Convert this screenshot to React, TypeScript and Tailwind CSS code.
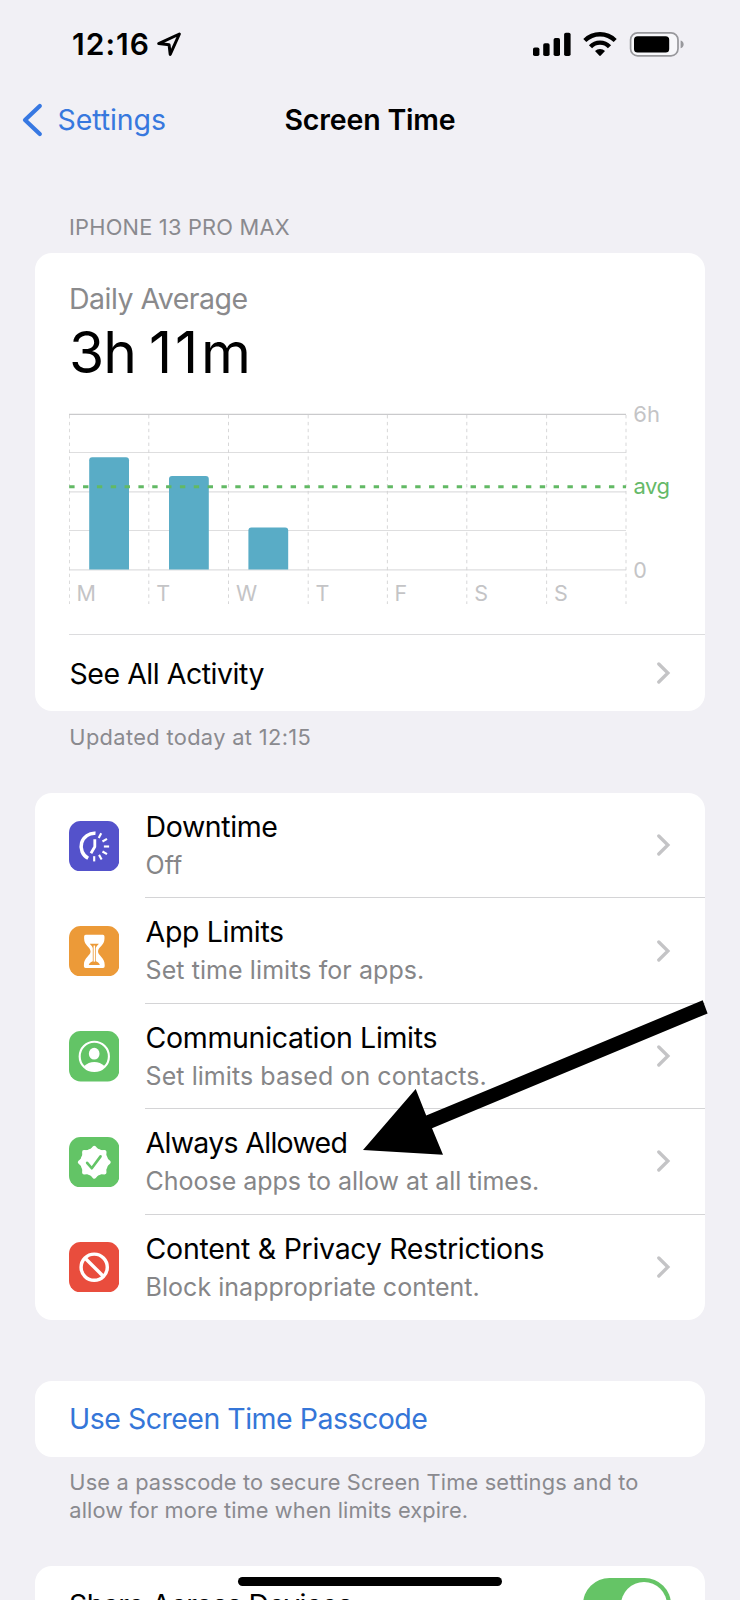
import type { ReactNode } from "react";

const days = ["M", "T", "W", "T", "F", "S", "S"];
const bars = [
  { x: 89.2, top: 457.3 },
  { x: 169, top: 476 },
  { x: 248.4, top: 527.6 },
];
const columnLines = [69.4, 148.8, 228.5, 308.2, 387.4, 466.8, 546.6, 626];

function Chevron() {
  return (
    <svg className="h-[22px] w-[14px] shrink-0" viewBox="0 0 14 22" fill="none">
      <path d="M1.8 2 L10.9 11 L1.8 20" stroke="#c4c4c6" strokeWidth="3.3" strokeLinejoin="miter" strokeLinecap="round" />
    </svg>
  );
}

function StatusBar() {
  return (
    <div className="flex h-[88px] items-center justify-between pl-[72px] pr-[55px]">
      <div className="flex items-center">
        <span className="w-[83.5px] text-[30px] leading-[36px] font-[590] tracking-[1px]">12:16</span>
        <svg className="h-[26px] w-[26px]" viewBox="155.5 31 26 26" fill="none">
          <path d="M178.9 34 L158.2 43.6 L168.6 44.8 L169.7 54.4 Z" stroke="#000" strokeWidth="3" strokeLinejoin="round" />
        </svg>
      </div>
      <svg className="h-[26px] w-[153px]" viewBox="532 30 153 26">
        <rect x="533" y="46.4" width="6.4" height="8.7" rx="1.8" />
        <rect x="543.2" y="42.2" width="6.4" height="12.9" rx="1.8" />
        <rect x="553.6" y="37" width="6.4" height="18.1" rx="1.8" />
        <rect x="564.1" y="31.8" width="6.5" height="23.3" rx="1.8" />
        <g fill="none" stroke="#000" strokeWidth="4.3">
          <path d="M584.8 39.5 A21.6 21.6 0 0 1 615.2 39.5" />
          <path d="M590.5 45.8 A12.9 12.9 0 0 1 609.5 45.8" />
        </g>
        <path d="M595 50 A7 7 0 0 1 605 50 L600.8 54.5 Q600 55.3 599.2 54.5 Z" />
        <rect x="630.6" y="31.8" width="47.4" height="23" rx="7" fill="#f7f7fa" stroke="#98989c" strokeWidth="1.7" />
        <rect x="634" y="35.2" width="35.2" height="16.4" rx="3.6" />
        <path d="M680.6 39.6 Q683.6 40.6 683.6 43.4 Q683.6 46.2 680.6 47.2 Z" fill="#98989c" />
      </svg>
    </div>
  );
}

function NavBar() {
  return (
    <div className="grid h-[62px] grid-cols-[1fr_auto_1fr] items-center pt-px text-[28.5px] leading-[34px]">
      <div className="flex items-center pl-[22px] text-[#3778de]">
        <svg className="h-[34px] w-[22px]" viewBox="0 0 22 34" fill="none">
          <path d="M17.8 3 L3 17 L17.8 31" stroke="#3778e2" strokeWidth="4.2" strokeLinecap="round" strokeLinejoin="round" />
        </svg>
        <span className="pl-[13.5px] tracking-[-0.08px]">Settings</span>
      </div>
      <h1 className="font-[590] tracking-[-0.17px]">Screen Time</h1>
    </div>
  );
}

function Chart() {
  return (
    <svg className="mt-[13px] block h-[234px] w-[636px]" viewBox="69 400 636 234">
      {[452.5, 491.9, 530.5, 569.8].map((y) => (
        <line key={y} x1="69" x2="626" y1={y} y2={y} stroke="#dededf" strokeWidth="1.2" />
      ))}
      <line x1="69" x2="626" y1="414.4" y2="414.4" stroke="#cacacc" strokeWidth="1.1" />
      {columnLines.map((x) => (
        <line key={x} x1={x} x2={x} y1="415" y2="604" stroke="#d2d2d4" strokeWidth="0.9" strokeDasharray="3.4 3.5" />
      ))}
      {bars.map((b) => (
        <path
          key={b.x}
          d={`M${b.x} 569.6 V${b.top + 3} q0 -3 3 -3 h33.8 q3 0 3 3 V569.6 Z`}
          fill="#59acc6"
        />
      ))}
      <line x1="69.2" x2="626" y1="486.8" y2="486.8" stroke="#62b964" strokeWidth="2.9" strokeDasharray="5.4 8.44" />
      <g fill="#c4c4c6" fontSize="21.5" fontFamily="Inter, sans-serif">
        {days.map((d, i) => (
          <text key={i} x={columnLines[i] + (d === "M" || d === "F" ? 7 : 7.4)} y="601.3">{d}</text>
        ))}
        <text x="633.3" y="422.3" fontSize="22">6h</text>
        <text x="633.3" y="577.6">0</text>
        <text x="633.5" y="494.4" fill="#65b968" fontSize="22" letterSpacing="-0.5">avg</text>
      </g>
    </svg>
  );
}

function IconTile({ color, children }: { color: string; children: ReactNode }) {
  return (
    <svg className="ml-[34px] h-[50.4px] w-[50.4px] shrink-0" viewBox="0 0 50 50">
      <rect width="50" height="50" rx="11.5" fill={color} />
      {children}
    </svg>
  );
}

const rayAngles = [-62, -31, 0, 31, 60, 90];
const lobes = [0, 45, 90, 135, 180, 225, 270, 315];

const downtimeIcon = (
  <IconTile color="#5452cb">
    <g fill="none" stroke="#fff">
      <path d="M26.3 12.2 A13.2 13.2 0 0 0 19 37" strokeWidth="3.5" />
      <path d="M25.6 18 V25.6 L21.8 32" strokeWidth="2.8" strokeLinejoin="round" />
      {rayAngles.map((a) => (
        <line key={a} x1="34.6" x2="39.8" y1="25.3" y2="25.3" strokeWidth="2.1" transform={`rotate(${a} 25 25.3)`} />
      ))}
    </g>
  </IconTile>
);

const hourglassIcon = (
  <IconTile color="#ec9a38">
    <path
      d="M16.6 8.8 H33.6 Q35.2 8.8 35.2 10.4 V12.4 C35.2 19.5 28.8 21 28.8 25.2 C28.8 29.4 35.4 31 35.4 38.4 V40 Q35.4 41.7 33.8 41.7 H16.4 Q14.8 41.7 14.8 40 V38.4 C14.8 31 21.4 29.4 21.4 25.2 C21.4 21 15 19.5 15 12.4 V10.4 Q15 8.8 16.6 8.8 Z"
      fill="#fff"
    />
    <path d="M20.6 17.6 H29.6 C28.8 19 26.8 20.2 26.6 22.2 V35 C28 35.5 30 36.5 30.6 38.6 H19.6 C20.2 36.5 22.2 35.5 23.6 35 V22.2 C23.4 20.2 21.4 19 20.6 17.6 Z" fill="#ec9a38" />
    <rect x="24.4" y="19.4" width="1.5" height="16" fill="#fff" />
  </IconTile>
);

const personIcon = (
  <IconTile color="#63c466">
    <circle cx="25.1" cy="25.2" r="14.5" fill="none" stroke="#fff" strokeWidth="2.1" />
    <ellipse cx="25" cy="22.5" rx="5.3" ry="5.9" fill="#fff" />
    <path d="M14.8 35 C17.8 32.2 21.4 30.8 25.1 30.8 C28.9 30.8 32.5 32.2 35.5 35 A14.6 14.6 0 0 1 14.8 35 Z" fill="#fff" />
  </IconTile>
);

const badgeIcon = (
  <IconTile color="#63c466">
    <g fill="#fff" stroke="#fff" strokeWidth="4" strokeLinejoin="round">
      {lobes.map((a) => (
        <path key={a} d="M25.1 25 L33.2 19.6 L39.4 25 L33.2 30.4 Z" transform={`rotate(${a} 25.1 25)`} />
      ))}
      <circle cx="25.1" cy="25" r="11.8" />
    </g>
    <path d="M18 25.6 L22.6 31 L31.3 19.2" fill="none" stroke="#63c466" strokeWidth="2.6" strokeLinecap="round" strokeLinejoin="round" />
  </IconTile>
);

const banIcon = (
  <IconTile color="#e94d3d">
    <g fill="none" stroke="#fff" strokeWidth="3.4">
      <circle cx="25" cy="25" r="13" />
      <path d="M15.8 15.8 L34.2 34.2" />
    </g>
  </IconTile>
);

const rows = [
  { icon: downtimeIcon, title: "Downtime", sub: "Off", titleTrack: "tracking-[-0.4px]", subTrack: "tracking-[0.05px]" },
  { icon: hourglassIcon, title: "App Limits", sub: "Set time limits for apps.", titleTrack: "tracking-[-0.33px]", subTrack: "tracking-[0.08px]" },
  { icon: personIcon, title: "Communication Limits", sub: "Set limits based on contacts.", titleTrack: "tracking-[-0.33px]", subTrack: "tracking-[0.06px]" },
  { icon: badgeIcon, title: "Always Allowed", sub: "Choose apps to allow at all times.", titleTrack: "tracking-[-0.7px]", subTrack: "tracking-[-0.02px]" },
  { icon: banIcon, title: "Content & Privacy Restrictions", sub: "Block inappropriate content.", titleTrack: "tracking-[-0.29px]", subTrack: "tracking-[0.03px]" },
];

export default function App() {
  return (
    <div className="relative h-[1600px] w-[740px] overflow-hidden bg-[#f1f0f5] font-['Inter',sans-serif] text-black">
      <StatusBar />
      <NavBar />

      <main className="px-[35px]">
        <h2 className="mt-[63px] pl-[34px] text-[21.8px] leading-[28px] tracking-[0.22px] text-[#8a8a8f]">IPHONE 13 PRO MAX</h2>

        <section className="mt-[12px] h-[458px] rounded-[17px] bg-white pl-[34px]">
          <p className="pt-[29px] text-[28.5px] leading-[34px] tracking-[-0.51px] text-[#8a8a8c]">Daily Average</p>
          <p className="mt-[3px] flex text-[57px] leading-[68px]">
            <span className="w-[80px] tracking-[-1px]">3h </span>
            <span className="tracking-[2.8px]">11m</span>
          </p>
          <Chart />
          <div className="flex h-[77px] items-center justify-between border-t border-[#dcdcde] pr-[34px]">
            <span className="pt-px pl-[0.5px] text-[28.5px] leading-[34px] tracking-[-0.47px]">See All Activity</span>
            <Chevron />
          </div>
        </section>
        <p className="mt-[12px] pl-[34.3px] text-[21.8px] leading-[28px] tracking-[0.36px] text-[#8a8a8f]">Updated today at 12:15</p>

        <section className="mt-[42px] rounded-[17px] bg-white">
          {rows.map((r, i) => (
            <div key={r.title} className="flex h-[105.4px] items-center">
              {r.icon}
              <div
                className={`ml-[25.6px] flex h-full flex-1 items-center justify-between pr-[34px] ${i < rows.length - 1 ? "border-b border-[#d4d4d6]" : ""}`}
              >
                <div className="pt-[0.4px] pl-[0.6px]">
                  <p className={`text-[28.5px] leading-[39px] ${r.titleTrack}`}>{r.title}</p>
                  <p className={`text-[25px] leading-[38px] text-[#868688] ${r.subTrack}`}>{r.sub}</p>
                </div>
                <Chevron />
              </div>
            </div>
          ))}
        </section>

        <section className="mt-[60.6px] flex h-[76px] items-center rounded-[17px] bg-white pl-[34px]">
          <span className="pt-px text-[28.5px] leading-[34px] tracking-[-0.5px] text-[#3576d8]">Use Screen Time Passcode</span>
        </section>
        <p className="mt-[12.9px] pl-[34.3px] text-[21.8px] leading-[27.5px] text-[#8a8a8f]">
          <span className="tracking-[0.15px]">Use a passcode to secure Screen Time settings and to</span>
          <br />
          <span className="tracking-[0.1px]">allow for more time when limits expire.</span>
        </p>

        <section className="mt-[42px] flex h-[77px] items-center justify-between rounded-[17px] bg-white pr-[34.5px] pl-[34px]">
          <span className="pt-px text-[28.5px] leading-[34px] tracking-[-0.6px]">Share Across Devices</span>
          <span className="flex h-[53px] w-[88px] items-center justify-end rounded-full bg-[#65c466] pr-[3.5px]">
            <span className="h-[46px] w-[46px] rounded-full bg-white" />
          </span>
        </section>
      </main>

      <svg className="absolute top-[990px] left-[355px] h-[175px] w-[360px]" viewBox="355 990 360 175">
        <path d="M363 1150 L415.7 1089 L426.2 1115.6 L702.7 1000.3 L707.6 1013.4 L432 1128.3 L443 1154.8 Z" />
      </svg>
      <div className="absolute top-[1577px] left-[238px] h-[9px] w-[264px] rounded-full bg-black" />
    </div>
  );
}
